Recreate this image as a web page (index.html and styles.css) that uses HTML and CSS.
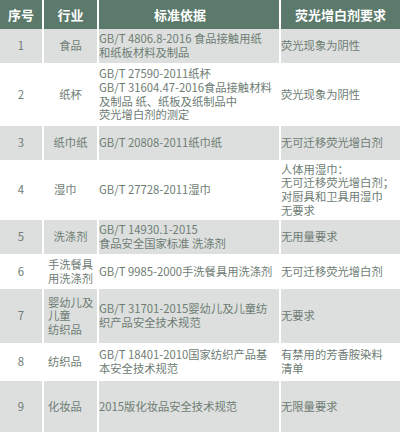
FILE: index.html
```html
<!DOCTYPE html>
<html lang="zh-CN">
<head>
<meta charset="utf-8">
<link rel="stylesheet" href="styles.css">
</head>
<body>
<table class="std">
  <colgroup>
    <col class="c1"><col class="c2"><col class="c3"><col class="c4">
  </colgroup>
  <thead>
    <tr class="h">
      <th>序号</th><th>行业</th><th class="th3">标准依据</th><th>荧光增白剂要求</th>
    </tr>
  </thead>
  <tbody>
    <tr class="g r1">
      <td class="no">1</td><td class="ind">食品</td>
      <td class="basis">GB/T 4806.8-2016 食品接触用纸<br>和纸板材料及制品</td>
      <td class="req">荧光现象为阴性</td>
    </tr>
    <tr class="w r2">
      <td class="no">2</td><td class="ind">纸杯</td>
      <td class="basis">GB/T 27590-2011纸杯<br>GB/T 31604.47-2016食品接触材料<br>及制品 纸、纸板及纸制品中<br>荧光增白剂的测定</td>
      <td class="req">荧光现象为阴性</td>
    </tr>
    <tr class="g r3">
      <td class="no">3</td><td class="ind">纸巾纸</td>
      <td class="basis">GB/T 20808-2011纸巾纸</td>
      <td class="req">无可迁移荧光增白剂</td>
    </tr>
    <tr class="w r4">
      <td class="no">4</td><td class="ind left12">湿巾</td>
      <td class="basis">GB/T 27728-2011湿巾</td>
      <td class="req">人体用湿巾：<br>无可迁移荧光增白剂；<br>对厨具和卫具用湿巾<br>无要求</td>
    </tr>
    <tr class="g r5">
      <td class="no">5</td><td class="ind">洗涤剂</td>
      <td class="basis">GB/T 14930.1-2015<br>食品安全国家标准 洗涤剂</td>
      <td class="req">无用量要求</td>
    </tr>
    <tr class="w r6">
      <td class="no">6</td><td class="ind">手洗餐具<br>用洗涤剂</td>
      <td class="basis">GB/T 9985-2000手洗餐具用洗涤剂</td>
      <td class="req">无可迁移荧光增白剂</td>
    </tr>
    <tr class="g r7">
      <td class="no">7</td><td class="ind left5">婴幼儿及<br>儿童<br>纺织品</td>
      <td class="basis">GB/T 31701-2015婴幼儿及儿童纺<br>织产品安全技术规范</td>
      <td class="req">无要求</td>
    </tr>
    <tr class="w r8">
      <td class="no">8</td><td class="ind left5">纺织品</td>
      <td class="basis">GB/T 18401-2010国家纺织产品基<br>本安全技术规范</td>
      <td class="req">有禁用的芳香胺染料<br>清单</td>
    </tr>
    <tr class="g r9">
      <td class="no">9</td><td class="ind left5">化妆品</td>
      <td class="basis">2015版化妆品安全技术规范</td>
      <td class="req">无限量要求</td>
    </tr>
  </tbody>
</table>
</body>
</html>
```

FILE: styles.css
```css
html, body {
  margin: 0;
  padding: 0;
  background: #ffffff;
}
body {
  width: 400px;
  height: 432px;
  overflow: hidden;
  font-family: "Noto Sans CJK SC", "Noto Sans", sans-serif;
}
.std {
  width: 400px;
  border-collapse: separate;
  border-spacing: 0;
  table-layout: fixed;
}
.c1 { width: 42px; }
.c2 { width: 55px; }
.c3 { width: 182px; }
.c4 { width: 121px; }

.std th, .std td {
  box-sizing: border-box;
  padding: 0;
  border-left: 2px solid #ffffff;
  vertical-align: middle;
  font-weight: normal;
}
.std th:first-child, .std td:first-child {
  border-left: none;
}
.h th {
  background: #5b7a6b;
  color: #ffffff;
  font-size: 13px;
  font-weight: bold;
  text-align: center;
  height: 29px;
  line-height: 16px;
}
.h .th3 {
  padding-right: 18px;
}
.std td {
  color: #6e7c74;
  font-size: 11.3px;
  line-height: 13.6px;
}
.g td { background: #dcdfdd; }
.w td { background: #ffffff; }

.no { text-align: center; }
.ind { text-align: center; }
.ind.left12 { text-align: left; padding-left: 10px; }
.ind.left5 { text-align: left; padding-left: 4px; }
.basis { text-align: left; padding-left: 4px; }
.req { text-align: left; padding-left: 7px; }

.r1 td { height: 34px; }
.r2 td { height: 63px; }
.r3 td { height: 34px; }
.r4 td { height: 60px; }
.r5 td { height: 34px; }
.r6 td { height: 35px; }
.r7 td { height: 54px; }
.r8 td { height: 38px; }
.r9 td { height: 51px; }
```
